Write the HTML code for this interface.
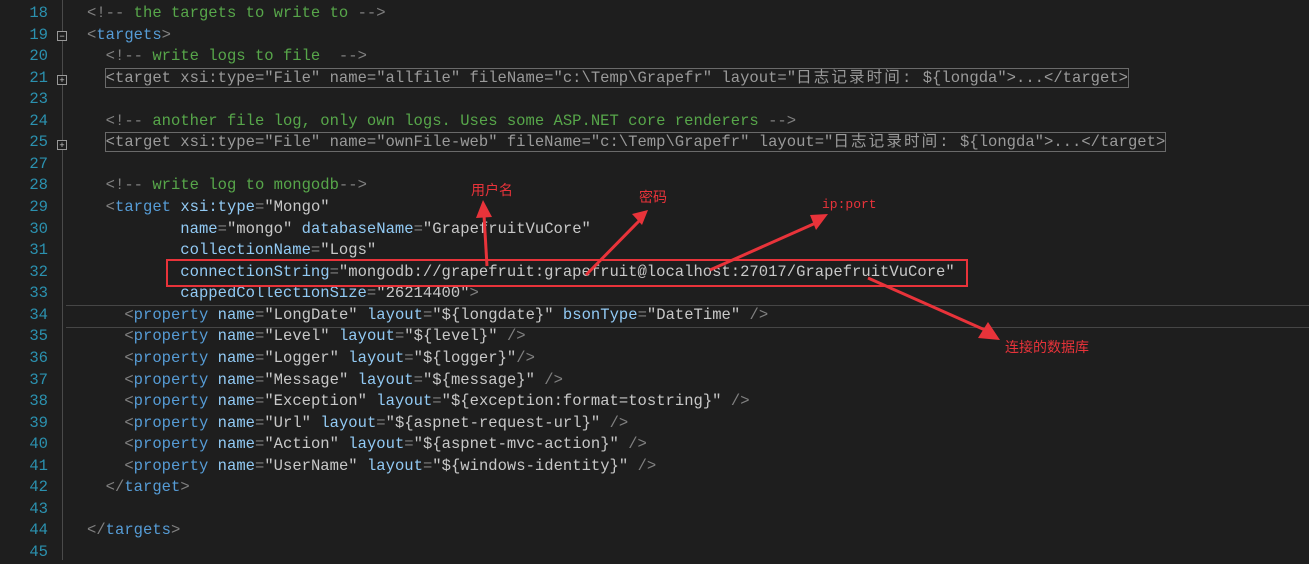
<!DOCTYPE html><html><head><meta charset="utf-8"><style>
body{margin:0;width:1309px;height:560px;background:#1e1e1e;overflow:hidden;position:relative;font-family:"Liberation Mono","Noto Sans CJK SC",monospace;font-size:15.55px}
.r{position:absolute;height:21.56px;line-height:21.56px;white-space:pre}
.n{left:0;width:48px;text-align:right;color:#2b91af}
.l{left:87px;color:#c8c8c8}
.c{color:#57a64a}.b{color:#808080}.t{color:#569cd6}.a{color:#92caf4}.v{color:#c8c8c8}
.col{color:#9a9a9a;outline:1px solid #6a6a6a;outline-offset:0}
.cj{letter-spacing:2.1px}
.g{position:absolute;left:62px;top:0;width:1px;height:560px;background:#4a4a4a}
.f{position:absolute;left:57px;width:8px;height:8px;border:1px solid #999;background:#1e1e1e;color:#ccc;font:9px/8px "Liberation Sans";text-align:center}
.lab{position:absolute;color:#e8333a;font-family:"Liberation Sans","Noto Sans CJK SC",sans-serif;font-size:14px}
</style></head><body>
<div class="g"></div>
<div class="f" style="top:31px">−</div>
<div class="f" style="top:75px">+</div>
<div class="f" style="top:140px">+</div>
<div style="position:absolute;left:66px;right:0;top:305px;height:21px;border-top:1px solid #464646;border-bottom:1px solid #464646"></div>
<div id="code"></div>
<script>
var rows=[
["18",'<span class="b">&lt;!-- </span><span class="c">the targets to write to</span><span class="b"> --&gt;</span>'],
["19",'<span class="b">&lt;</span><span class="t">targets</span><span class="b">&gt;</span>'],
["20",'  <span class="b">&lt;!-- </span><span class="c">write logs to file </span><span class="b"> --&gt;</span>'],
["21",'  <span class="col">&lt;target xsi:type="File" name="allfile" fileName="c:\\Temp\\Grapefr" layout="<span class="cj">日志记录时间:</span> ${longda"&gt;...&lt;/target&gt;</span>'],
["23",''],
["24",'  <span class="b">&lt;!-- </span><span class="c">another file log, only own logs. Uses some ASP.NET core renderers</span><span class="b"> --&gt;</span>'],
["25",'  <span class="col">&lt;target xsi:type="File" name="ownFile-web" fileName="c:\\Temp\\Grapefr" layout="<span class="cj">日志记录时间:</span> ${longda"&gt;...&lt;/target&gt;</span>'],
["27",''],
["28",'  <span class="b">&lt;!-- </span><span class="c">write log to mongodb</span><span class="b">--&gt;</span>'],
["29",'  <span class="b">&lt;</span><span class="t">target</span> <span class="a">xsi:type</span><span class="b">=</span>"Mongo"'],
["30",'          <span class="a">name</span><span class="b">=</span>"mongo" <span class="a">databaseName</span><span class="b">=</span>"GrapefruitVuCore"'],
["31",'          <span class="a">collectionName</span><span class="b">=</span>"Logs"'],
["32",'          <span class="a">connectionString</span><span class="b">=</span>"mongodb://grapefruit:grapefruit@localhost:27017/GrapefruitVuCore"'],
["33",'          <span class="a">cappedCollectionSize</span><span class="b">=</span>"26214400"<span class="b">&gt;</span>'],
["34",'    <span class="b">&lt;</span><span class="t">property</span> <span class="a">name</span><span class="b">=</span>"LongDate" <span class="a">layout</span><span class="b">=</span>"${longdate}" <span class="a">bsonType</span><span class="b">=</span>"DateTime" <span class="b">/&gt;</span>'],
["35",'    <span class="b">&lt;</span><span class="t">property</span> <span class="a">name</span><span class="b">=</span>"Level" <span class="a">layout</span><span class="b">=</span>"${level}" <span class="b">/&gt;</span>'],
["36",'    <span class="b">&lt;</span><span class="t">property</span> <span class="a">name</span><span class="b">=</span>"Logger" <span class="a">layout</span><span class="b">=</span>"${logger}"<span class="b">/&gt;</span>'],
["37",'    <span class="b">&lt;</span><span class="t">property</span> <span class="a">name</span><span class="b">=</span>"Message" <span class="a">layout</span><span class="b">=</span>"${message}" <span class="b">/&gt;</span>'],
["38",'    <span class="b">&lt;</span><span class="t">property</span> <span class="a">name</span><span class="b">=</span>"Exception" <span class="a">layout</span><span class="b">=</span>"${exception:format=tostring}" <span class="b">/&gt;</span>'],
["39",'    <span class="b">&lt;</span><span class="t">property</span> <span class="a">name</span><span class="b">=</span>"Url" <span class="a">layout</span><span class="b">=</span>"${aspnet-request-url}" <span class="b">/&gt;</span>'],
["40",'    <span class="b">&lt;</span><span class="t">property</span> <span class="a">name</span><span class="b">=</span>"Action" <span class="a">layout</span><span class="b">=</span>"${aspnet-mvc-action}" <span class="b">/&gt;</span>'],
["41",'    <span class="b">&lt;</span><span class="t">property</span> <span class="a">name</span><span class="b">=</span>"UserName" <span class="a">layout</span><span class="b">=</span>"${windows-identity}" <span class="b">/&gt;</span>'],
["42",'  <span class="b">&lt;/</span><span class="t">target</span><span class="b">&gt;</span>'],
["43",''],
["44",'<span class="b">&lt;/</span><span class="t">targets</span><span class="b">&gt;</span>'],
["45",'']];
var h='';rows.forEach(function(r,i){var y=(3+i*21.56).toFixed(2);h+='<div class="r n" style="top:'+y+'px">'+r[0]+'</div><div class="r l" style="top:'+y+'px">'+r[1]+'</div>';});
document.getElementById('code').innerHTML=h;
</script>
<div style="position:absolute;left:166px;top:259px;width:798px;height:24px;border:2px solid #e8333a"></div>
<svg width="1309" height="560" style="position:absolute;left:0;top:0">
<g stroke="#e8333a" stroke-width="3" fill="#e8333a">
<line x1="487" y1="266" x2="484" y2="215"/><polygon points="476,218 483,200 492,217" stroke="none"/>
<line x1="586" y1="275" x2="640" y2="220"/><polygon points="632,214 648,210 642,225" stroke="none"/>
<line x1="710" y1="270" x2="818" y2="222"/><polygon points="810,215 828,214 816,230" stroke="none"/>
<line x1="868" y1="278" x2="985" y2="330"/><polygon points="978,338 1000,340 988,322" stroke="none"/>
</g></svg>
<div class="lab" style="left:471px;top:180px">用户名</div>
<div class="lab" style="left:639px;top:187px">密码</div>
<div class="lab" style="left:822px;top:197px;font-family:'Liberation Mono',monospace;font-size:13px">ip:port</div>
<div class="lab" style="left:1005px;top:337px">连接的数据库</div>
</body></html>
